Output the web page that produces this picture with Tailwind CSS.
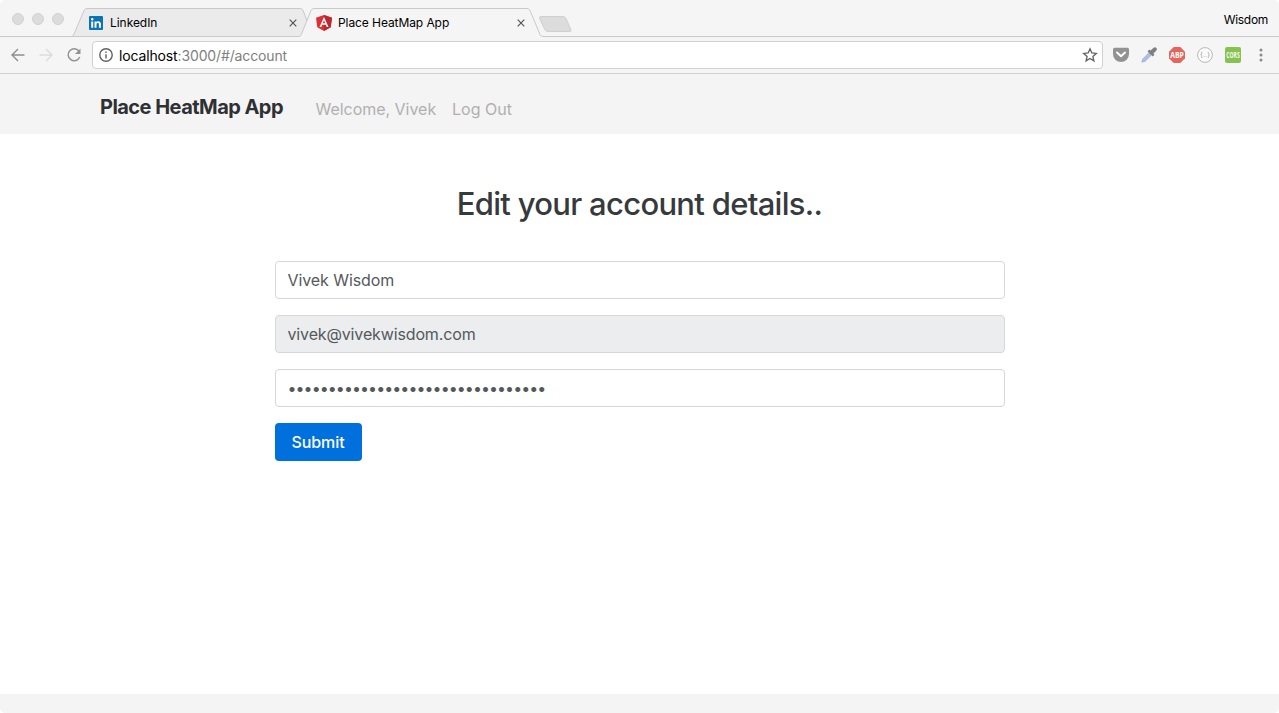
<!DOCTYPE html>
<html lang="en">
<head>
<meta charset="utf-8">
<title>Place HeatMap App</title>
<script src="https://cdn.jsdelivr.net/npm/@tailwindcss/browser@4"></script>
</head>
<body class="flex h-screen flex-col overflow-hidden bg-white font-['Inter',sans-serif]">
  <header class="shrink-0 rounded-t-[5px] bg-[#f5f5f5] font-['Inter',sans-serif]">
    <div class="relative flex h-[37px]">
      <!-- tab outlines -->
      <svg class="absolute inset-0 h-[37px] w-full" fill="none" stroke="#c9c9c9">
        <path d="M72 36.500Q73.500 36 74 34L84 10.500Q85 8.500 87 8.500H300Q302 8.500 303 10.500L307 20.500L301 35Q300 36.500 299 36.500Z" fill="#ebebeb" stroke="none"/>
        <path d="M0 36.500H72Q73.500 36 74 34L84 10.500Q85 8.500 87 8.500H300Q302 8.500 303 10.500L307 20.500"/>
        <path d="M72 36.500H299Q300.500 36.500 301.300 34.500L311 10.500Q312 8.500 314 8.500H527Q529 8.500 530 10.500L540 34.500Q541 36.500 543 36.500H1279"/>
        <path d="M541 16.500H563Q565 16.500 566 18.500L571 30Q571.500 31.500 570 31.500H548Q546 31.500 545 30L539.500 18Q539 16.500 541 16.500Z" fill="#dcdcdc" stroke="#d0d0d0"/>
      </svg>
      <div class="relative flex w-[88px] gap-2 pt-[13px] pl-3">
        <i class="size-3 rounded-full border border-[#d2d2d2] bg-[#dcdcdc]"></i>
        <i class="size-3 rounded-full border border-[#d2d2d2] bg-[#dcdcdc]"></i>
        <i class="size-3 rounded-full border border-[#d2d2d2] bg-[#dcdcdc]"></i>
      </div>
      <div class="relative flex w-[228px] items-center pt-[9px] pl-px">
        <svg class="size-[14px]" viewBox="0 0 14 14"><rect width="14" height="14" rx="1" fill="#0a74b5"/><path d="M2.200 5.400H4.200V11.800H2.200ZM5.500 5.400H7.400V6.300C8.300 4.800 11.900 4.700 11.900 8V11.800H9.900V8.400C9.900 6.500 7.500 6.600 7.500 8.400V11.800H5.500Z" fill="#fff"/><circle cx="3.200" cy="3.200" r="1.200" fill="#fff"/></svg>
        <span class="ml-[7px] w-[178px] text-[12px] leading-4 tracking-[-0.05px] whitespace-nowrap text-black">LinkedIn</span>
        <svg class="size-[10px]" viewBox="0 0 10 10" stroke="#555" stroke-width="1.200"><path d="M1.700 1.700L8.300 8.300M8.300 1.700L1.700 8.300"/></svg>
      </div>
      <div class="relative flex w-[228px] items-center pt-[9px]">
        <svg class="h-4 w-4" viewBox="0 0 16 16"><path d="M8 0L16 2.700L14.700 12.300L8 16L1.300 12.300L0 2.700Z" fill="#dd3035"/><path d="M8 0L16 2.700L14.700 12.300L8 16Z" fill="#bd282e"/><path d="M8 2L3.500 12H5.300L6.200 9.700H9.800L10.700 12H12.500ZM8 5.300L9.200 8.200H6.800Z" fill="#fff" fill-rule="evenodd"/></svg>
        <span class="ml-[6px] w-[178px] text-[12px] leading-4 tracking-[-0.08px] whitespace-nowrap text-black">Place HeatMap App</span>
        <svg class="size-[10px]" viewBox="0 0 10 10" stroke="#555" stroke-width="1.200"><path d="M1.700 1.700L8.300 8.300M8.300 1.700L1.700 8.300"/></svg>
      </div>
      <span class="relative mt-3 mr-[11px] ml-auto text-[12px] leading-4 tracking-[-0.3px] text-black">Wisdom</span>
    </div>
    <div class="flex h-[37px] items-center border-b border-[#d0d0d0] pr-[10px] pl-[10px]">
      <svg class="size-4" viewBox="0 0 16 16" fill="none" stroke="#8f8f8f" stroke-width="1.400"><path d="M14.500 8H2M8 2L2 8L8 14"/></svg>
      <svg class="ml-3 size-4" viewBox="0 0 16 16" fill="none" stroke="#dcdcdc" stroke-width="1.400"><path d="M1.500 8H14M8 2L14 8L8 14"/></svg>
      <svg class="ml-3 size-4" viewBox="0 0 16 16" fill="none" stroke="#939393" stroke-width="1.500"><path d="M13.200 4.500A6 6 0 1 0 13.700 10"/><path d="M14.500 1.500V7H9Z" fill="#939393" stroke="none"/></svg>
      <div class="ml-[10px] flex h-7 w-[1011px] items-center rounded-[4px] border border-[#d0d0d0] bg-white pr-1 pl-[6px]">
        <svg class="size-[14px]" viewBox="0 0 14 14" fill="none" stroke="#606060" stroke-width="1.400"><circle cx="7" cy="7" r="6.200"/><path d="M7 6.200V10.500M7 3.400V5"/></svg>
        <span class="ml-[6px] pt-px text-[14px] leading-5 tracking-[-0.14px] whitespace-nowrap text-[#808080]"><span class="text-black">localhost</span>:3000/#/account</span>
        <svg class="ml-auto size-4" viewBox="0 0 16 16" fill="none" stroke="#606060" stroke-width="1.300"><path d="M8 1.800L9.800 6L14.300 6.400L10.900 9.400L11.900 13.900L8 11.500L4.100 13.900L5.100 9.400L1.700 6.400L6.200 6Z"/></svg>
      </div>
      <div class="ml-[10px] flex items-center gap-3">
        <svg class="size-4" viewBox="0 0 16 16"><path d="M1.500 .8H14.500Q16 .8 16 2.300V7A8 8 0 0 1 0 7V2.300Q0 .8 1.500 .8Z" fill="#929292"/><path d="M4 5.500L8 9.300L12 5.500" fill="none" stroke="#fff" stroke-width="2" stroke-linecap="round" stroke-linejoin="round"/></svg>
        <svg class="size-4" viewBox="0 0 16 16"><path d="M.8 15.200L1.800 12L8 5.800L10.300 8.100L4.200 14.200Z" fill="#a9c0ec" stroke="#a3abba" stroke-width=".8"/><path d="M6.500 4.400L8.300 2.500L9.600 3.600L12 1.200Q14 -.4 15.400 1Q16.600 2.500 14.800 4.200L12.400 6.400L13.500 7.700L11.700 9.500Z" fill="#808084"/></svg>
        <svg class="size-4 overflow-visible" viewBox="0 0 16 16"><path d="M4.700 0H11.300L16 4.700V11.300L11.300 16H4.700L0 11.300V4.700Z" fill="#e2665c"/><text x="8" y="10.900" text-anchor="middle" textLength="13.500" lengthAdjust="spacingAndGlyphs" font-family="Open Sans, sans-serif" font-size="8" font-weight="700" fill="#fff">ABP</text></svg>
        <svg class="size-4" viewBox="0 0 16 16"><circle cx="8" cy="8" r="7.400" fill="#fbfbfb" stroke="#b8b8b8"/><text x="8" y="10" text-anchor="middle" textLength="10" font-family="Inter, sans-serif" font-size="6.500" fill="#999">{..}</text></svg>
        <svg class="size-4 overflow-visible" viewBox="0 0 16 16"><rect width="16" height="16" rx="2" fill="#86c252"/><text x="8" y="10.800" text-anchor="middle" textLength="13.500" lengthAdjust="spacingAndGlyphs" font-family="Open Sans, sans-serif" font-size="8" font-weight="700" fill="#f4fae9">CORS</text></svg>
        <svg class="size-4" viewBox="0 0 16 16" fill="#8a8a8a"><circle cx="8" cy="3" r="1.500"/><circle cx="8" cy="8" r="1.500"/><circle cx="8" cy="13" r="1.500"/></svg>
      </div>
    </div>
  </header>
  <nav class="flex h-[60px] shrink-0 items-start bg-[#f4f4f4] pl-[100px]">
    <a class="mt-[18px] w-[215.500px] text-[20px] leading-[30px] font-bold tracking-[-0.54px] whitespace-nowrap text-[#2e3033]">Place HeatMap App</a>
    <a class="mt-[23px] w-[136.500px] text-[16px] leading-6 tracking-[-0.03px] whitespace-nowrap text-[#b0b0b0]">Welcome, Vivek</a>
    <a class="mt-[23px] text-[16px] leading-6 whitespace-nowrap text-[#b0b0b0]">Log Out</a>
  </nav>
  <main class="flex grow flex-col items-center pt-[50px]">
    <h1 class="text-[31px] leading-10 font-medium tracking-[-0.7px] whitespace-nowrap text-[#373a3c]">Edit your account details..</h1>
    <form class="mt-[37px] flex w-[730px] flex-col gap-4">
      <input class="h-[38px] rounded-[4px] border border-[#d6d7d8] bg-white px-3 text-[16px] tracking-[-0.08px] text-[#55595c]" value="Vivek Wisdom">
      <input class="h-[38px] rounded-[4px] border border-[#d6d7d8] bg-[#ebedef] px-3 text-[16px] tracking-[-0.14px] text-[#55595c]" value="vivek@vivekwisdom.com" readonly>
      <input type="password" class="h-[38px] rounded-[4px] border border-[#d6d7d8] bg-white px-3 text-[16px] tracking-[-0.94px] text-[#55595c]" value="12345678901234567890123456789012">
      <button type="button" class="h-[38px] w-[87px] rounded-[4px] bg-[#0070dc] text-[16px] font-medium tracking-[-0.05px] text-white">Submit</button>
    </form>
  </main>
  <footer class="h-[19px] shrink-0 rounded-b-[5px] bg-[#f4f4f4]"></footer>
</body>
</html>
